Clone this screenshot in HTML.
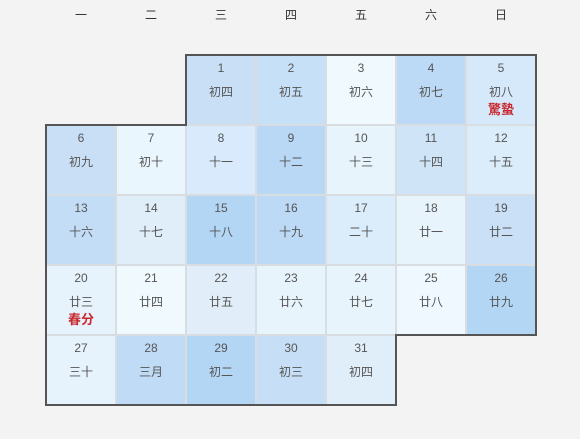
<!DOCTYPE html>
<html><head><meta charset="utf-8"><style>
body{margin:0;width:580px;height:439px;background:#f3f3f3;font-family:"Liberation Sans","Noto Sans CJK SC",sans-serif;position:relative;overflow:hidden}
.h{position:absolute;top:6px;width:70px;text-align:center;font-size:12px;color:#333}
.c{position:absolute;width:70px;height:70px;box-sizing:border-box;border:1px solid #d8dde2;text-align:center;color:#555;font-size:12px}
.n{position:absolute;top:5px;left:0;right:0;line-height:14px}
.l{position:absolute;top:29px;left:0;right:0;line-height:14px}
.t{position:absolute;top:47px;left:0;right:0;line-height:14px;color:#c8282d;font-weight:bold;font-size:13px}
svg{position:absolute;left:0;top:0}
</style></head><body>
<div class="h" style="left:46px">一</div><div class="h" style="left:116px">二</div><div class="h" style="left:186px">三</div><div class="h" style="left:256px">四</div><div class="h" style="left:326px">五</div><div class="h" style="left:396px">六</div><div class="h" style="left:466px">日</div>

<div class="c" style="left:186px;top:55px;background:#c8dff6"><div class="n">1</div><div class="l">初四</div></div>
<div class="c" style="left:256px;top:55px;background:#c6e0f7"><div class="n">2</div><div class="l">初五</div></div>
<div class="c" style="left:326px;top:55px;background:#f0f9fd"><div class="n">3</div><div class="l">初六</div></div>
<div class="c" style="left:396px;top:55px;background:#bcdaf5"><div class="n">4</div><div class="l">初七</div></div>
<div class="c" style="left:466px;top:55px;background:#d6e9fb"><div class="n">5</div><div class="l">初八</div><div class="t">驚蟄</div></div>

<div class="c" style="left:46px;top:125px;background:#c8dff6"><div class="n">6</div><div class="l">初九</div></div>
<div class="c" style="left:116px;top:125px;background:#eaf6fe"><div class="n">7</div><div class="l">初十</div></div>
<div class="c" style="left:186px;top:125px;background:#d8eafb"><div class="n">8</div><div class="l">十一</div></div>
<div class="c" style="left:256px;top:125px;background:#b9d8f5"><div class="n">9</div><div class="l">十二</div></div>
<div class="c" style="left:326px;top:125px;background:#e8f4fc"><div class="n">10</div><div class="l">十三</div></div>
<div class="c" style="left:396px;top:125px;background:#cfe4f7"><div class="n">11</div><div class="l">十四</div></div>
<div class="c" style="left:466px;top:125px;background:#dbecfb"><div class="n">12</div><div class="l">十五</div></div>

<div class="c" style="left:46px;top:195px;background:#c3ddf6"><div class="n">13</div><div class="l">十六</div></div>
<div class="c" style="left:116px;top:195px;background:#e0eefa"><div class="n">14</div><div class="l">十七</div></div>
<div class="c" style="left:186px;top:195px;background:#b4d6f5"><div class="n">15</div><div class="l">十八</div></div>
<div class="c" style="left:256px;top:195px;background:#bcd9f5"><div class="n">16</div><div class="l">十九</div></div>
<div class="c" style="left:326px;top:195px;background:#dbecfb"><div class="n">17</div><div class="l">二十</div></div>
<div class="c" style="left:396px;top:195px;background:#e8f4fc"><div class="n">18</div><div class="l">廿一</div></div>
<div class="c" style="left:466px;top:195px;background:#c9e0f7"><div class="n">19</div><div class="l">廿二</div></div>

<div class="c" style="left:46px;top:265px;background:#e6f2fc"><div class="n">20</div><div class="l">廿三</div><div class="t">春分</div></div>
<div class="c" style="left:116px;top:265px;background:#f0f9fe"><div class="n">21</div><div class="l">廿四</div></div>
<div class="c" style="left:186px;top:265px;background:#e1eefa"><div class="n">22</div><div class="l">廿五</div></div>
<div class="c" style="left:256px;top:265px;background:#e8f4fc"><div class="n">23</div><div class="l">廿六</div></div>
<div class="c" style="left:326px;top:265px;background:#e8f4fc"><div class="n">24</div><div class="l">廿七</div></div>
<div class="c" style="left:396px;top:265px;background:#eef8fe"><div class="n">25</div><div class="l">廿八</div></div>
<div class="c" style="left:466px;top:265px;background:#b4d6f5"><div class="n">26</div><div class="l">廿九</div></div>

<div class="c" style="left:46px;top:335px;background:#e6f2fc"><div class="n">27</div><div class="l">三十</div></div>
<div class="c" style="left:116px;top:335px;background:#c0dbf5"><div class="n">28</div><div class="l">三月</div></div>
<div class="c" style="left:186px;top:335px;background:#b4d6f5"><div class="n">29</div><div class="l">初二</div></div>
<div class="c" style="left:256px;top:335px;background:#c6dff7"><div class="n">30</div><div class="l">初三</div></div>
<div class="c" style="left:326px;top:335px;background:#e0eefa"><div class="n">31</div><div class="l">初四</div></div>

<svg width="580" height="439"><path d="M186 125 V55 H536 V335 H396 V405 H46 V125 Z" fill="none" stroke="#555" stroke-width="2"/></svg>
</body></html>
